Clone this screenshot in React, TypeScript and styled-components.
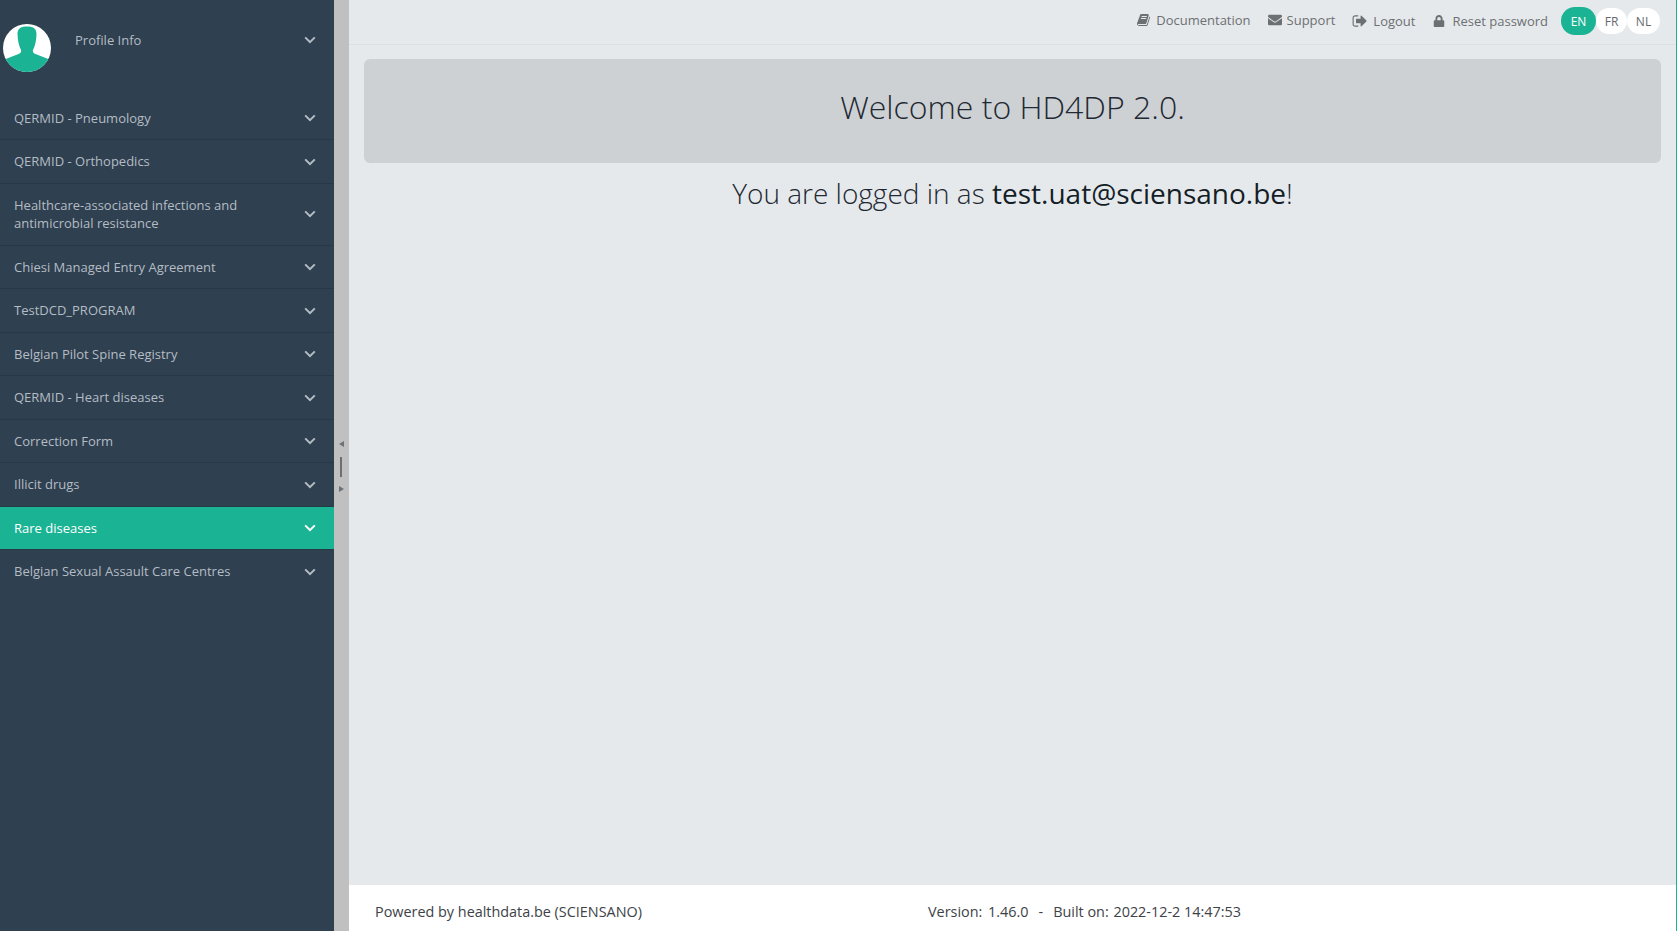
import React from 'react';
import styled, { createGlobalStyle } from 'styled-components';
import { FaEnvelope, FaLock } from 'react-icons/fa';

const GlobalStyle = createGlobalStyle`
  html, body {
    margin: 0;
    padding: 0;
    height: 100%;
    overflow: hidden;
  }
  body {
    font-family: "Open Sans", "Liberation Sans", sans-serif;
    font-size: 13px;
    color: #676a6c;
    background: #e6e9ec;
  }
`;

const Page = styled.div`
  display: flex;
  width: 1677px;
  height: 931px;
`;

const Sidebar = styled.nav`
  width: 334px;
  flex: none;
  background: #2f4050;
  color: #b4bcc4;
`;

const ProfileRow = styled.div`
  display: flex;
  align-items: flex-start;
  height: 96.5px;
  padding: 24px 18px 0 3px;
  box-sizing: border-box;
`;

const Avatar = styled.svg`
  width: 48px;
  height: 48px;
  flex: none;
`;

const ProfileLabel = styled.span`
  flex: 1;
  margin: 7px 0 0 24px;
  line-height: 19px;
`;

const MenuList = styled.ul`
  list-style: none;
  margin: 0;
  padding: 0;
`;

const MenuRow = styled.li<{ $active?: boolean }>`
  display: flex;
  align-items: center;
  justify-content: space-between;
  padding: 12px 18px 12px 14px;
  line-height: 18.5px;
  border-bottom: 1px solid #293846;
  background: ${(p) => (p.$active ? '#1ab394' : 'transparent')};
  color: ${(p) => (p.$active ? '#fff' : 'inherit')};

  &:last-child {
    border-bottom: 0;
  }
`;

const MenuLabel = styled.span`
  max-width: 260px;
`;

const ChevronIcon = styled.svg<{ $nudge?: number }>`
  width: 12px;
  height: 8px;
  flex: none;
  margin-top: ${(p) => p.$nudge ?? 1}px;
`;

const Chevron = ({ nudge }: { nudge?: number }) => (
  <ChevronIcon $nudge={nudge} viewBox="0 0 12 8" fill="none" stroke="currentColor" strokeWidth="2">
    <path d="M1.2 1.4 6 6.200l4.800-4.800" />
  </ChevronIcon>
);

const Splitter = styled.div`
  width: 15px;
  flex: none;
  background: #c0c0c0;
  display: flex;
  flex-direction: column;
  align-items: center;
  padding: 441px 1px 0 0;
  box-sizing: border-box;
`;

const GripArrow = styled.svg`
  width: 5px;
  height: 6px;
  display: block;
  color: #6b7278;
`;

const GripBar = styled.div`
  width: 2px;
  height: 20px;
  margin: 10px 0 9px;
  background: #6f6f6f;
`;

const Main = styled.div`
  flex: 1;
  min-width: 0;
  display: flex;
  flex-direction: column;
  border-right: 1px solid #1ab394;
`;

const TopBar = styled.header`
  height: 45px;
  flex: none;
  box-sizing: border-box;
  border-bottom: 1px solid #dde0e3;
  display: flex;
  align-items: center;
  justify-content: flex-end;
  padding: 0 16px 2px 0;
`;

const TopLink = styled.a<{ $gap?: number; $space?: number; $lift?: number; $icon?: number }>`
  display: inline-flex;
  align-items: center;
  color: #6d7073;
  gap: ${(p) => p.$gap ?? 6}px;
  margin-right: ${(p) => p.$space ?? 18}px;
  margin-top: ${(p) => p.$lift ?? 0}px;

  svg {
    width: ${(p) => p.$icon ?? 14}px;
    height: ${(p) => p.$icon ?? 14}px;
  }
`;

const LangGroup = styled.div`
  display: flex;
  align-items: center;
`;

const LangButton = styled.span<{ $active?: boolean; $wide?: boolean }>`
  display: flex;
  align-items: center;
  justify-content: center;
  width: ${(p) => (p.$active ? 35 : p.$wide ? 33 : 31)}px;
  height: ${(p) => (p.$active ? 28 : 26)}px;
  border-radius: 14px;
  background: ${(p) => (p.$active ? '#1ab394' : '#fff')};
  color: ${(p) => (p.$active ? '#fff' : '#676a6c')};
  font-size: 12px;
`;

const Content = styled.main`
  flex: 1;
  padding: 14px 15px 0 15px;
  text-align: center;
`;

const Jumbotron = styled.div`
  height: 104px;
  box-sizing: border-box;
  padding-top: 26px;
  background: #cdd1d4;
  border-radius: 6px;
`;

const WelcomeTitle = styled.h1`
  margin: 0;
  font-size: 32px;
  font-weight: 300;
  line-height: 44px;
  color: #1f2933;
`;

const LoggedIn = styled.p`
  margin: 9px 0 0;
  font-size: 28px;
  font-weight: 300;
  line-height: 42px;
  color: #1f2933;

  strong {
    font-weight: 400;
    color: #141e27;
  }
`;

const Footer = styled.footer`
  height: 47px;
  flex: none;
  box-sizing: border-box;
  background: #fff;
  border-top: 1px solid #e7eaec;
  display: flex;
  align-items: center;
  padding: 6px 0 0 26px;
  font-size: 14.4px;
  color: #3d4247;
`;

const FooterLeft = styled.span`
  width: 553px;
`;

const FooterValue = styled.span<{ $gap?: number }>`
  margin-left: ${(p) => p.$gap ?? 2}px;
`;

const FooterSep = styled.span`
  margin: 0 10px;
`;

const BookIcon = () => (
  <svg viewBox="0 0 1792 1792" fill="currentColor">
    <path d="M1639 478q40 57 18 129l-275 906q-19 64-76.500 107.500t-122.500 43.500h-923q-77 0-148.500-53.500t-99.500-131.500q-24-67-2-127 0-4 3-27t4-37q1-8-3-21.500t-3-19.500q2-11 8-21t16.500-23.500 16.500-23.500q23-38 45-91.500t30-91.500q3-10 .5-30t-.5-28q3-11 17-28t17-23q21-36 42-92t25-90q1-9-2.500-32t.5-28q4-13 22-30.500t22-22.500q19-26 42.500-84.500t27.500-96.500q1-8-3-25.500t-2-26.500q2-8 9-18t18-23 17-21q8-12 16.500-30.500t15-35 16-36 19.500-32 26.500-23.500 36-11.500 47.500 5.500l-1 3q38-9 51-9h761q74 0 114 56t18 130l-274 906q-36 119-71.500 153.500t-128.500 34.500h-869q-27 0-38 15-11 16-1 43 24 70 144 70h923q29 0 56-15.500t35-41.500l300-987q7-22 5-57 38 15 59 43zm-1064 2q-4 13 2 22.500t20 9.500h608q13 0 25.500-9.500t16.500-22.500l21-64q4-13-2-22.500t-20-9.500h-608q-13 0-25.500 9.500t-16.500 22.500zm-83 256q-4 13 2 22.500t20 9.500h608q13 0 25.500-9.500t16.500-22.500l21-64q4-13-2-22.500t-20-9.500h-608q-13 0-25.500 9.500t-16.500 22.500z" />
  </svg>
);

const SignOutIcon = () => (
  <svg viewBox="0 0 1792 1792" fill="currentColor">
    <path d="M704 1440q0 4 1 20t.5 26.500-3 23.500-10 19.500-20.500 6.500h-320q-119 0-203.500-84.500t-84.500-203.500v-704q0-119 84.500-203.500t203.500-84.500h320q13 0 22.500 9.500t9.500 22.500q0 4 1 20t.5 26.500-3 23.500-10 19.500-20.500 6.500h-320q-66 0-113 47t-47 113v704q0 66 47 113t113 47h312l11.500 1 11.500 3 8 5.500 7 9 2 13.500zm928-544q0 26-19 45l-544 544q-19 19-45 19t-45-19-19-45v-288h-448q-26 0-45-19t-19-45v-384q0-26 19-45t45-19h448v-288q0-26 19-45t45-19 45 19l544 544q19 19 19 45z" />
  </svg>
);

const items: { label: string; active?: boolean; nudge?: number }[] = [
  { label: 'QERMID - Pneumology' },
  { label: 'QERMID - Orthopedics' },
  { label: 'Healthcare-associated infections and antimicrobial resistance', nudge: 0 },
  { label: 'Chiesi Managed Entry Agreement' },
  { label: 'TestDCD_PROGRAM' },
  { label: 'Belgian Pilot Spine Registry' },
  { label: 'QERMID - Heart diseases' },
  { label: 'Correction Form' },
  { label: 'Illicit drugs' },
  { label: 'Rare diseases', active: true },
  { label: 'Belgian Sexual Assault Care Centres' },
];

const App = () => {
  return (
    <Page>
      <GlobalStyle />
      <Sidebar>
        <ProfileRow>
          <Avatar viewBox="0 0 48 48">
            <defs>
              <clipPath id="avatar-clip">
                <circle cx="24" cy="24" r="24" />
              </clipPath>
            </defs>
            <circle cx="24" cy="24" r="24" fill="#fff" />
            <g clipPath="url(#avatar-clip)" fill="#1ab394">
              <path d="M14.500 10C14.500 5 17 2.500 24 2.500S33.500 5 33.500 10c0 6-1.500 12-3.500 16-.5 2 .5 3 2.500 4l14 5.500V50H1.500V35.500l14-5.500c2-1 3-2 2.500-4-2-4-3.500-10-3.500-16z" />
            </g>
          </Avatar>
          <ProfileLabel>Profile Info</ProfileLabel>
          <Chevron nudge={12} />
        </ProfileRow>
        <MenuList>
          {items.map((item) => (
            <MenuRow key={item.label} $active={item.active}>
              <MenuLabel>{item.label}</MenuLabel>
              <Chevron nudge={item.nudge} />
            </MenuRow>
          ))}
        </MenuList>
      </Sidebar>
      <Splitter>
        <GripArrow viewBox="0 0 5 6">
          <path d="M5 0v6L0 3z" fill="currentColor" />
        </GripArrow>
        <GripBar />
        <GripArrow viewBox="0 0 5 6">
          <path d="M0 0v6l5-3z" fill="currentColor" />
        </GripArrow>
      </Splitter>
      <Main>
        <TopBar>
          <TopLink $gap={5} $lift={-2} $space={17}>
            <BookIcon />
            Documentation
          </TopLink>
          <TopLink $gap={5} $lift={-2} $space={17}>
            <FaEnvelope />
            Support
          </TopLink>
          <TopLink $gap={5} $icon={16} $space={18}>
            <SignOutIcon />
            Logout
          </TopLink>
          <TopLink $gap={7} $space={13} $icon={12}>
            <FaLock />
            Reset password
          </TopLink>
          <LangGroup>
            <LangButton $active>EN</LangButton>
            <LangButton>FR</LangButton>
            <LangButton $wide>NL</LangButton>
          </LangGroup>
        </TopBar>
        <Content>
          <Jumbotron>
            <WelcomeTitle>Welcome to HD4DP 2.0.</WelcomeTitle>
          </Jumbotron>
          <LoggedIn>
            You are logged in as <strong>test.uat@sciensano.be</strong>!
          </LoggedIn>
        </Content>
        <Footer>
          <FooterLeft>Powered by healthdata.be (SCIENSANO)</FooterLeft>
          <span>
            Version: <FooterValue>1.46.0</FooterValue>
            <FooterSep>-</FooterSep>
            Built on: <FooterValue $gap={1}>2022-12-2 14:47:53</FooterValue>
          </span>
        </Footer>
      </Main>
    </Page>
  );
};

export default App;
